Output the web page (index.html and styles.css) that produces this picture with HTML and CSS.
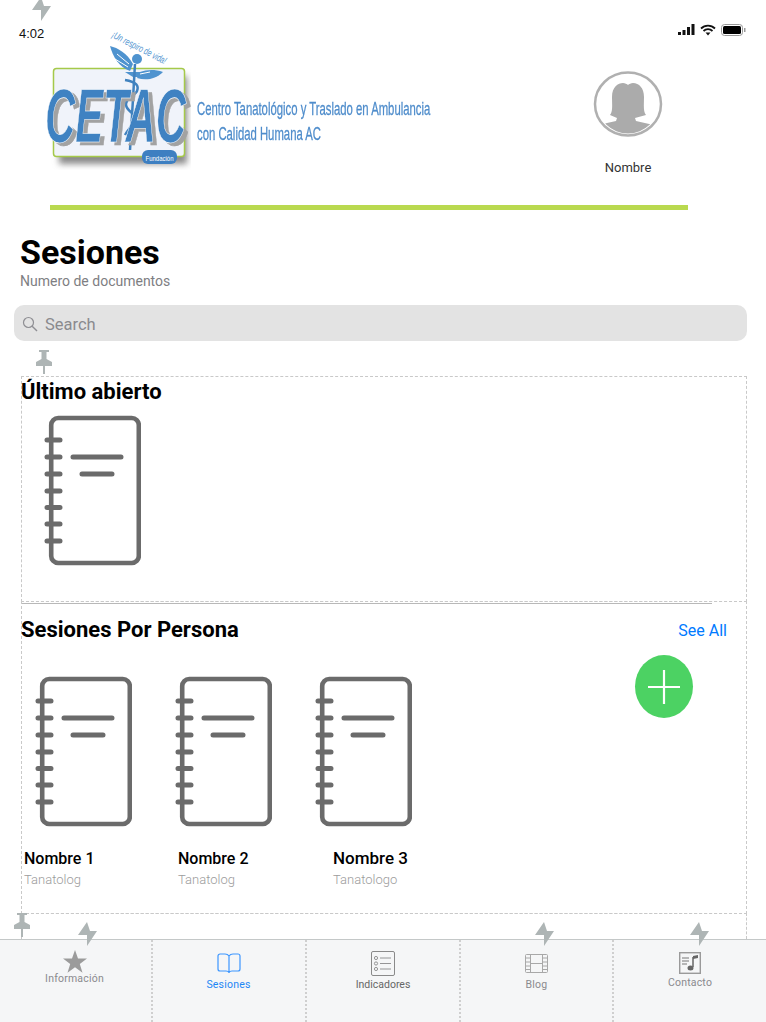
FILE: index.html
```html
<!DOCTYPE html>
<html lang="es">
<head>
<meta charset="utf-8">
<title>Sesiones</title>
<link rel="stylesheet" href="styles.css">
</head>
<body>
<svg width="0" height="0" class="defs">
  <defs>
    <symbol id="bolt" viewBox="0 0 20 24"><path d="M9 0 12 9h7L9 24V13H0z" fill="#aeb5b5"/></symbol>
    <symbol id="pin" viewBox="0 0 16 24"><path d="M3 0h10v2h-2.500v7l5.500 3v4H9v8H7v-8H0v-4l5.500-3V2H3z" fill="#aeb5b5"/></symbol>
    <symbol id="notebook" viewBox="0 0 97 151">
      <g fill="none" stroke="#6b6b6b" stroke-linecap="round">
        <rect x="7.200" y="3" width="87.600" height="145" rx="7" stroke-width="4.600"/>
        <path d="M3 25h13M3 42h13M3 59h13M3 76h13M3 92.500h13M3 109h13M3 126h13" stroke-width="5"/>
        <path d="M29 42h48M38 59h30" stroke-width="5"/>
      </g>
    </symbol>
  </defs>
</svg>
<div class="app">
  <div class="status">
    <span class="time">4:02</span>
    <span class="status-icons">
      <svg width="18" height="12" viewBox="0 0 18 12"><path d="M1 8h3v3H1zM5.500 6h3v5h-3zM10 3h3v8h-3zM14.500 0h3v11h-3z" fill="#111"/></svg>
      <svg width="16" height="12" viewBox="0 0 16 12"><path d="M1 4.500a10 10 0 0 1 14 0M3.500 7a6.500 6.500 0 0 1 9 0" fill="none" stroke="#111" stroke-width="1.800"/><path d="M5.500 8.500h5L8 11.500z" fill="#111"/></svg>
      <svg width="25" height="12" viewBox="0 0 25 12"><rect x=".5" y=".5" width="21" height="11" rx="3" fill="none" stroke="#999"/><rect x="2" y="2" width="18" height="8" rx="1.500" fill="#000"/><rect x="23" y="4" width="1.500" height="4" fill="#999"/></svg>
    </span>
  </div>
  <header class="header">
    <div class="brand">
      <svg class="logo" width="146" height="140" viewBox="0 0 146 140">
        <defs><filter id="sh" x="-10%" y="-10%" width="120%" height="120%"><feGaussianBlur stdDeviation="3"/></filter></defs>
        <rect x="14" y="46" width="128" height="88" fill="#8a8a8a" filter="url(#sh)"/>
        <rect x="8.500" y="38.500" width="131" height="88" rx="3" fill="#f0f3fa" stroke="#a5c94a" stroke-width="1.500"/>
        <text x="66" y="7" class="logo-motto" transform="rotate(27 66 7)" textLength="60" lengthAdjust="spacingAndGlyphs">¡Un respiro de vida!</text>
        <g fill="#4f93cf">
          <path d="M65 16c8 2 17 7 23 18l-3 7C74 37 68 27 65 16z"/>
          <path d="M118 42c-9-3-17-2-23 0l-3 6c9 3 19 1 26-6z"/>
          <circle cx="92" cy="29" r="5"/>
          <path d="M80 42h24l-8 5H88z"/>
        </g>
        <path d="M72 24l12 10M70 29l13 8M105 42l-10 2" stroke="#fff" fill="none"/>
        <path d="M90 34 85 120" fill="none" stroke="#4082bf" stroke-width="2.500"/>
        <path d="M80 50c12 2 14 6 12 11s-12 7-11 14 10 8 9 14-7 10-10 16" fill="none" stroke="#4082bf" stroke-width="2.500"/>
        <text x="0" y="112" class="logo-mark" textLength="141" lengthAdjust="spacingAndGlyphs">CETAC</text>
        <rect x="97" y="120" width="35" height="14" rx="6" fill="#3d7fc1"/>
        <text x="114.500" y="130.500" class="logo-foundation" textLength="28" lengthAdjust="spacingAndGlyphs">Fundación</text>
      </svg>
      <div class="logo-tag">
        <span>Centro Tanatológico y Traslado en Ambulancia</span>
        <span>con Calidad Humana AC</span>
      </div>
    </div>
    <div class="profile">
      <svg width="70" height="66" viewBox="0 0 70 66">
        <clipPath id="av"><ellipse cx="35" cy="33" rx="30.500" ry="29.500"/></clipPath>
        <ellipse cx="35" cy="33" rx="33" ry="31.500" fill="#fff" stroke="#b0b0b0" stroke-width="2.500"/>
        <g clip-path="url(#av)" fill="#ababab">
          <path d="M17 44c3-4 2-10 2-18 0-10 6-14 11-14 2 0 4 1 5 2 1-1 3-2 5-2 6 0 11 5 11 14 0 8-1 14 2 18l-11 3 1 3 22 5v12H0V55l23-5 1-3z"/>
        </g>
      </svg>
      <span class="profile-name">Nombre</span>
    </div>
  </header>
  <div class="rule"></div>
  <div class="title-block">
    <h1>Sesiones</h1>
    <p>Numero de documentos</p>
  </div>
  <div class="search">
    <svg width="16" height="16" viewBox="0 0 16 16"><circle cx="6.500" cy="6.500" r="5" fill="none" stroke="#8e8e93" stroke-width="1.200"/><path d="m10.200 10.200 4.800 4.800" stroke="#8e8e93" stroke-width="1.400"/></svg>
    <span>Search</span>
  </div>
  <section class="panel panel-last">
    <h2>Último abierto</h2>
    <svg class="note note-last"><use href="#notebook"/></svg>
  </section>
  <section class="panel panel-people">
    <div class="panel-rule"></div>
    <div class="people-head">
      <h2>Sesiones Por Persona</h2>
      <a class="see-all">See All</a>
    </div>
    <div class="people">
      <div class="notes">
        <svg class="note"><use href="#notebook"/></svg>
        <svg class="note"><use href="#notebook"/></svg>
        <svg class="note"><use href="#notebook"/></svg>
      </div>
      <div class="names">
        <div class="name n1"><strong>Nombre 1</strong><span>Tanatolog</span></div>
        <div class="name n2"><strong>Nombre 2</strong><span>Tanatolog</span></div>
        <div class="name n3"><strong>Nombre 3</strong><span>Tanatologo</span></div>
      </div>
    </div>
    <button class="add" aria-label="Agregar"><svg width="34" height="36" viewBox="0 0 34 36"><path d="M17 1v34M1 18h32" stroke="#fff" stroke-width="2.200"/></svg></button>
  </section>
  <div class="panel panel-tail"></div>
  <nav class="tabs">
    <div class="tab tab-info">
      <svg width="24" height="23" viewBox="0 0 24 23"><path d="m12 0 3 8.500h9l-7.200 5.400 2.700 8.800L12 17.300l-7.500 5.400 2.700-8.800L0 8.500h9z" fill="#9b9b9b"/></svg>
      <span>Información</span>
    </div>
    <div class="tab tab-ses active">
      <svg width="24" height="20" viewBox="0 0 24 20"><path d="M12 3C11 1.500 9.500 1 8 1H3a2 2 0 0 0-2 2v13a2 2 0 0 0 2 2h6c1.500 0 2.500.5 3 1.500.5-1 1.500-1.500 3-1.500h6a2 2 0 0 0 2-2V3a2 2 0 0 0-2-2h-5c-1.500 0-3 .5-4 2zm0 0v16" fill="none" stroke="#3c96ff" stroke-width="1.200"/></svg>
      <span>Sesiones</span>
    </div>
    <div class="tab tab-ind">
      <svg width="24" height="25" viewBox="0 0 24 25"><rect x=".5" y=".5" width="23" height="24" rx="1.500" fill="none" stroke="#8a8a8a"/><g fill="none" stroke="#8a8a8a" stroke-width=".9"><circle cx="5" cy="7" r="1.600"/><circle cx="5" cy="12.500" r="1.600"/><circle cx="5" cy="18" r="1.600"/><path d="M9 7h11M9 12.500h11M9 18h11"/></g></svg>
      <span>Indicadores</span>
    </div>
    <div class="tab tab-blog">
      <svg width="23" height="19" viewBox="0 0 23 19"><rect x=".5" y=".5" width="22" height="18" rx="1" fill="none" stroke="#a8a8a8"/><path d="M5.500 0v19M17.500 0v19M5.500 9.500h12M0 4h5M0 8h5M0 12h5M0 15.500h5M18 4h5M18 8h5M18 12h5M18 15.500h5" fill="none" stroke="#a8a8a8"/></svg>
      <span>Blog</span>
    </div>
    <div class="tab tab-con">
      <svg width="22" height="22" viewBox="0 0 22 22"><rect x=".7" y=".7" width="20.600" height="20.600" fill="none" stroke="#9a9a9a" stroke-width="1.400"/><path d="M3 6h7M3 9h7M3 12h5" stroke="#777" fill="none"/><path d="M14 5v10" stroke="#666" stroke-width="1.500"/><path d="M14 4l5-1v3l-5 1z" fill="#666"/><ellipse cx="11.500" cy="16" rx="3" ry="2.500" fill="#666"/></svg>
      <span>Contacto</span>
    </div>
  </nav>

  <svg class="mark bolt b1"><use href="#bolt"/></svg>
  <svg class="mark bolt b2"><use href="#bolt"/></svg>
  <svg class="mark bolt b3"><use href="#bolt"/></svg>
  <svg class="mark bolt b4"><use href="#bolt"/></svg>
  <svg class="mark pin p1"><use href="#pin"/></svg>
  <svg class="mark pin p2"><use href="#pin"/></svg>
</div>
</body>
</html>
```
FILE: styles.css
```css
* { box-sizing: border-box; }
html, body { margin: 0; padding: 0; background: #fff; }
body { font-family: Roboto, "Liberation Sans", sans-serif; color: #000; }
.defs { position: absolute; }
.app { position: relative; width: 766px; height: 1022px; overflow: hidden; display: flex; flex-direction: column; }

.status { position: absolute; top: 24px; left: 19px; right: 20px; display: flex; justify-content: space-between; align-items: center; height: 18px; }
.time { font-family: "Liberation Sans", sans-serif; font-size: 13px; color: #111; }
.status-icons { display: flex; gap: 5px; align-items: center; margin-top: -7px; }

.header { height: 175px; margin-top: 30px; padding-left: 45px; display: flex; flex: none; }
.brand { width: 392px; flex: none; display: flex; }
.logo { flex: none; }
.logo-motto { font-family: "Liberation Sans", sans-serif; font-size: 10px; font-style: italic; fill: #4f93cf; }
.logo-mark { font-family: "Liberation Sans", sans-serif; font-weight: 700; font-style: italic; font-size: 76px; fill: #3f82c2; stroke: #fff; stroke-width: .6px; filter: drop-shadow(4px 3px 0 #a2a2a2); }
.logo-foundation { font-family: "Liberation Sans", sans-serif; font-size: 8px; fill: #fff; text-anchor: middle; }
.logo-tag { display: flex; flex-direction: column; align-items: flex-start; padding: 66px 0 0 6px; font-family: "Liberation Sans", sans-serif; font-size: 18.500px; line-height: 25px; color: #4e8ccb; -webkit-text-stroke: .3px #4e8ccb; white-space: nowrap; }
.logo-tag span { display: block; flex: none; transform: scaleX(.612); transform-origin: left center; }

.profile { margin-left: 156px; padding-top: 41px; width: 70px; display: flex; flex-direction: column; align-items: center; }
.profile-name { margin-top: 23px; font-size: 13px; line-height: 16px; color: #333; }

.rule { flex: none; height: 5px; margin-left: 50px; width: 638px; background: #b9d94f; }

.title-block { flex: none; padding: 21px 0 0 20px; }
h1 { margin: 0; font-size: 34px; line-height: 42px; font-weight: 700; }
.title-block p { margin: 0; font-size: 14px; line-height: 16px; color: #7e7e82; }

.search { flex: none; margin: 16px 19px 0 14px; height: 36px; border-radius: 10px; background: #e3e3e3; display: flex; align-items: center; gap: 7px; padding: 2px 0 0 8px; font-size: 16.500px; color: #8a8a8e; }

.panel { flex: none; margin-left: 21px; width: 726px; border: 1px dashed #c9c9c9; position: relative; }
h2 { margin: 0 0 0 -1px; font-size: 22px; line-height: 26px; font-weight: 700; }
.panel-last { margin-top: 35px; height: 226px; padding-top: 2px; }
.note { display: block; width: 97px; height: 151px; }
.note-last { margin: 10px 0 0 22px; }

.panel-people { margin-top: -1px; height: 313px; padding-top: 1px; }
.panel-rule { height: 1px; width: 690px; background: #b8b8b8; }
.people-head { display: flex; justify-content: space-between; align-items: center; margin-top: 13px; padding-right: 19px; height: 26px; }
.see-all { font-size: 16px; color: #007aff; }
.people { margin-top: 33px; }
.notes { display: flex; gap: 43px; padding-left: 13px; }
.names { display: flex; margin-top: 22px; padding-left: 2px; }
.name { display: flex; flex-direction: column; }
.n1 { width: 154px; }
.n2 { width: 155px; }
.name strong { font-size: 16px; line-height: 19px; font-weight: 500; }
.n3 strong { font-size: 17px; }
.name span { margin-top: 4px; font-size: 13px; line-height: 15px; color: #9c9c9c; font-weight: 300; }
.add { position: absolute; left: 613px; top: 53px; width: 58px; height: 63px; border: 0; padding: 0; border-radius: 50%; background: #4cd263; display: flex; align-items: center; justify-content: center; }

.panel-tail { margin-top: -1px; height: 26px; border-bottom: 0; }

.tabs { flex: 1; position: relative; z-index: 1; display: grid; grid-template-columns: 151px 154px 154px 153px 154px; background: #f5f6f7; border-top: 1px solid #c4c8c8; font-size: 10.500px; color: #8a8a8e; letter-spacing: .2px; }
.tab { display: flex; flex-direction: column; align-items: center; border-left: 2px dotted #cfcfcf; }
.tab:first-child { border-left: 0; }
.tab span { line-height: 13px; }
.tab-info { padding-top: 10px; padding-right: 2px; }
.tab-info span { margin-top: -1px; }
.tab-ses { padding-top: 13px; color: #1e87f5; padding-right: 1px; }
.tab-ses span { margin-top: 5px; }
.tab-ind { padding-top: 11px; color: #666; letter-spacing: 0; }
.tab-ind span { margin-top: 2px; }
.tab-blog { padding-top: 14px; }
.tab-blog span { margin-top: 5px; }
.tab-con { padding-top: 12px; }
.tab-con span { margin-top: 2px; }

.mark { position: absolute; z-index: 2; }
.bolt { width: 20px; height: 24px; }
.b1 { left: 78px; top: 922px; }
.b2 { left: 535px; top: 922px; }
.b3 { left: 690px; top: 922px; }
.b4 { left: 32px; top: -3px; }
.pin { width: 16px; height: 24px; }
.p1 { left: 36px; top: 350px; }
.p2 { left: 14px; top: 913px; }
```
